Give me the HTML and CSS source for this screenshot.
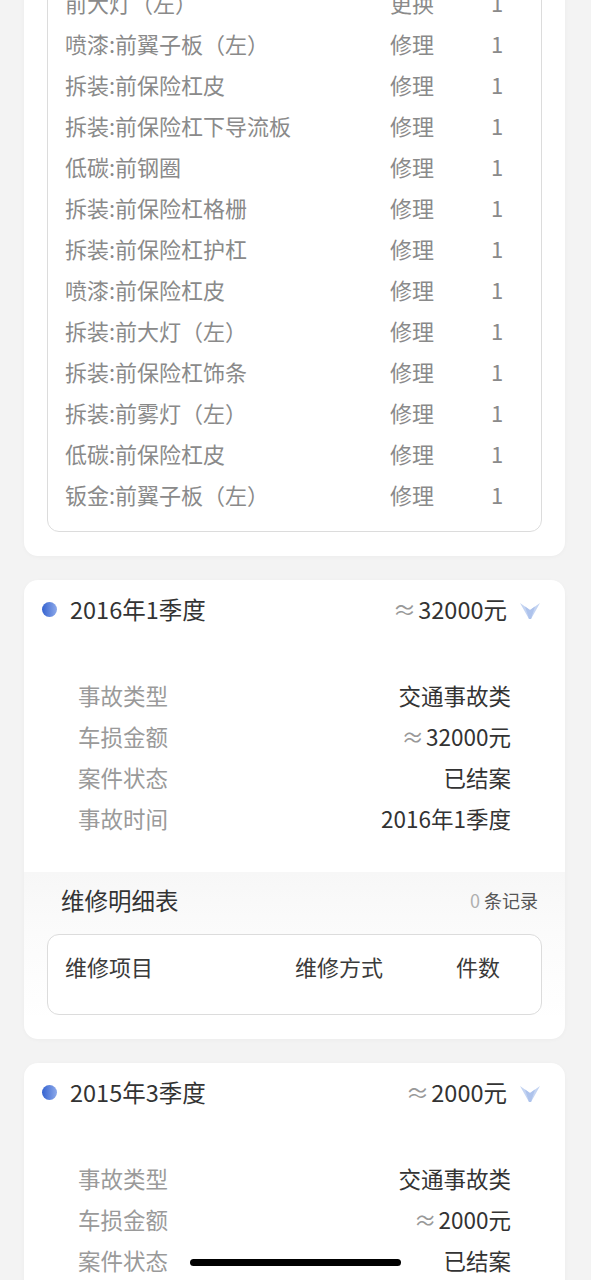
FILE: index.html
```
<!DOCTYPE html>
<html lang="zh-CN">
<head>
    <meta charset="UTF-8">
    <title>出险记录</title>
    <meta name="viewport" content="width=device-width, initial-scale=1.0">
    <link rel="stylesheet" href="styles.css">
</head>
<body>
<div class="list">

    <div class="card">
        <div class="repair-box">
            <div class="repair-row"><span>前大灯（左）</span><span>更换</span><span>1</span></div>
            <div class="repair-row"><span>喷漆:前翼子板（左）</span><span>修理</span><span>1</span></div>
            <div class="repair-row"><span>拆装:前保险杠皮</span><span>修理</span><span>1</span></div>
            <div class="repair-row"><span>拆装:前保险杠下导流板</span><span>修理</span><span>1</span></div>
            <div class="repair-row"><span>低碳:前钢圈</span><span>修理</span><span>1</span></div>
            <div class="repair-row"><span>拆装:前保险杠格栅</span><span>修理</span><span>1</span></div>
            <div class="repair-row"><span>拆装:前保险杠护杠</span><span>修理</span><span>1</span></div>
            <div class="repair-row"><span>喷漆:前保险杠皮</span><span>修理</span><span>1</span></div>
            <div class="repair-row"><span>拆装:前大灯（左）</span><span>修理</span><span>1</span></div>
            <div class="repair-row"><span>拆装:前保险杠饰条</span><span>修理</span><span>1</span></div>
            <div class="repair-row"><span>拆装:前雾灯（左）</span><span>修理</span><span>1</span></div>
            <div class="repair-row"><span>低碳:前保险杠皮</span><span>修理</span><span>1</span></div>
            <div class="repair-row"><span>钣金:前翼子板（左）</span><span>修理</span><span>1</span></div>
        </div>
    </div>

    <div class="card">
        <div class="card-head">
            <span class="dot"></span>
            <span class="period">2016年1季度</span>
            <span class="amount"><span class="approx">≈</span>32000元</span>
            <svg class="chevron" width="20" height="18" viewBox="0 0 20 18">
                <path d="M0 1 L10 8 L20 1 L11 17 L9 17 Z" fill="#c4d4f2"/>
                <path d="M5 4.5 L10 8 L15 4.5 L11 17 L9 17 Z" fill="#aec3ec"/>
            </svg>
        </div>
        <div class="details">
            <div class="detail-row"><span class="label">事故类型</span><span class="value">交通事故类</span></div>
            <div class="detail-row"><span class="label">车损金额</span><span class="value"><span class="approx">≈</span>32000元</span></div>
            <div class="detail-row"><span class="label">案件状态</span><span class="value">已结案</span></div>
            <div class="detail-row"><span class="label">事故时间</span><span class="value">2016年1季度</span></div>
        </div>
        <div class="repair-section">
            <div class="sub-head">
                <span class="sub-title">维修明细表</span>
                <span class="count"><span class="zero">0</span> 条记录</span>
            </div>
            <div class="repair-box empty">
                <div class="repair-head"><span>维修项目</span><span>维修方式</span><span>件数</span></div>
            </div>
        </div>
    </div>

    <div class="card">
        <div class="card-head">
            <span class="dot"></span>
            <span class="period">2015年3季度</span>
            <span class="amount"><span class="approx">≈</span>2000元</span>
            <svg class="chevron" width="20" height="18" viewBox="0 0 20 18">
                <path d="M0 1 L10 8 L20 1 L11 17 L9 17 Z" fill="#c4d4f2"/>
                <path d="M5 4.5 L10 8 L15 4.5 L11 17 L9 17 Z" fill="#aec3ec"/>
            </svg>
        </div>
        <div class="details">
            <div class="detail-row"><span class="label">事故类型</span><span class="value">交通事故类</span></div>
            <div class="detail-row"><span class="label">车损金额</span><span class="value"><span class="approx">≈</span>2000元</span></div>
            <div class="detail-row"><span class="label">案件状态</span><span class="value">已结案</span></div>
            <div class="detail-row"><span class="label">事故时间</span><span class="value">2015年3季度</span></div>
        </div>
    </div>

</div>
<div class="home-bar"></div>
</body>
</html>
```

FILE: styles.css
```
* {
    box-sizing: border-box;
}

html, body {
    height: 1280px;
    overflow: hidden;
}

body {
    margin: 0;
    background-color: #f3f3f3;
    font-family: "Noto Sans CJK SC", "Noto Sans", sans-serif;
    color: #333;
}

.list {
    margin-top: -42px;
    padding: 0 26px 0 24px;
}

.card {
    background-color: #fff;
    border-radius: 14px;
    padding: 12px 23px 24px;
    margin-bottom: 24px;
    box-shadow: 0 1px 4px rgba(0, 0, 0, 0.03);
    overflow: hidden;
}

.repair-box {
    border: 1px solid #dcdcdc;
    border-radius: 12px;
    padding: 11px 17px 16px;
}

.repair-row, .repair-head {
    display: grid;
    grid-template-columns: 325px 101px auto;
    height: 41px;
    line-height: 41px;
    font-size: 22px;
    color: #8a8a8a;
    white-space: nowrap;
}

.repair-head {
    grid-template-columns: 230px 161px auto;
    color: #3a3a3a;
}

.repair-box.empty {
    padding: 11px 17px 27px;
    background-color: #fff;
}

/* header of each quarter */
.card-head {
    display: flex;
    align-items: center;
    height: 58px;
    margin: -12px -23px 0;
    padding: 0 25px 0 18px;
}

.dot {
    width: 15px;
    height: 15px;
    border-radius: 50%;
    background: linear-gradient(to right, #3563d0, #8eaaea);
    margin-right: 13px;
}

.period {
    font-size: 23.5px;
    color: #333;
}

.amount {
    margin-left: auto;
    font-size: 23.5px;
    color: #333;
}

.approx {
    color: #999;
    margin-right: 2px;
}

.chevron {
    margin-left: 13px;
    margin-top: 4px;
}

.details {
    margin: 37px 31px 0;
}

.detail-row {
    display: flex;
    justify-content: space-between;
    height: 41px;
    line-height: 41px;
    font-size: 22.5px;
}

.label {
    color: #9a9a9a;
}

.value {
    color: #333;
}

.repair-section {
    margin: 33px -23px 0;
    padding: 0 23px;
    background: linear-gradient(#f7f7f7 0, #fbfbfb 60px, #fff 150px);
}

.sub-head {
    display: flex;
    justify-content: space-between;
    align-items: center;
    height: 56px;
    padding: 0 4px 0 14px;
    margin-bottom: 6px;
}

.sub-title {
    font-size: 23.5px;
    color: #333;
}

.count {
    font-size: 18px;
    color: #555;
}

.zero {
    color: #b0b0b0;
}

.home-bar {
    position: fixed;
    left: 190px;
    bottom: 14px;
    width: 211px;
    height: 7px;
    border-radius: 4px;
    background-color: #000;
}
```
